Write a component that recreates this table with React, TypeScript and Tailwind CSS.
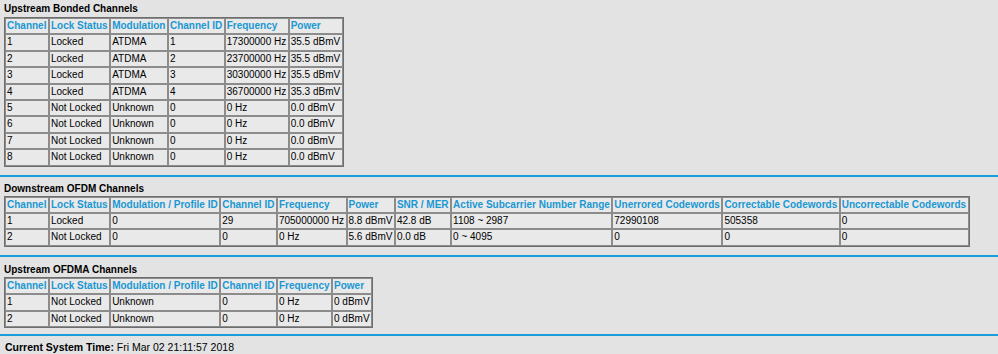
import React from "react";

type Table = { headers: string[]; rows: string[][] };

const upstreamBonded: Table = {
  headers: ["Channel", "Lock Status", "Modulation", "Channel ID", "Frequency", "Power"],
  rows: [
    ["1", "Locked", "ATDMA", "1", "17300000 Hz", "35.5 dBmV"],
    ["2", "Locked", "ATDMA", "2", "23700000 Hz", "35.5 dBmV"],
    ["3", "Locked", "ATDMA", "3", "30300000 Hz", "35.5 dBmV"],
    ["4", "Locked", "ATDMA", "4", "36700000 Hz", "35.3 dBmV"],
    ["5", "Not Locked", "Unknown", "0", "0 Hz", "0.0 dBmV"],
    ["6", "Not Locked", "Unknown", "0", "0 Hz", "0.0 dBmV"],
    ["7", "Not Locked", "Unknown", "0", "0 Hz", "0.0 dBmV"],
    ["8", "Not Locked", "Unknown", "0", "0 Hz", "0.0 dBmV"],
  ],
};

const downstreamOfdm: Table = {
  headers: [
    "Channel",
    "Lock Status",
    "Modulation / Profile ID",
    "Channel ID",
    "Frequency",
    "Power",
    "SNR / MER",
    "Active Subcarrier Number Range",
    "Unerrored Codewords",
    "Correctable Codewords",
    "Uncorrectable Codewords",
  ],
  rows: [
    ["1", "Locked", "0", "29", "705000000 Hz", "8.8 dBmV", "42.8 dB", "1108 ~ 2987", "72990108", "505358", "0"],
    ["2", "Not Locked", "0", "0", "0 Hz", "5.6 dBmV", "0.0 dB", "0 ~ 4095", "0", "0", "0"],
  ],
};

const upstreamOfdma: Table = {
  headers: ["Channel", "Lock Status", "Modulation / Profile ID", "Channel ID", "Frequency", "Power"],
  rows: [
    ["1", "Not Locked", "Unknown", "0", "0 Hz", "0 dBmV"],
    ["2", "Not Locked", "Unknown", "0", "0 Hz", "0 dBmV"],
  ],
};

function StatusTable({ data }: { data: Table }) {
  return (
    <table className="border-separate border-spacing-0 border border-[#6e6e6e] bg-[#e9e9e9]">
      <thead>
        <tr>
          {data.headers.map((h) => (
            <th
              key={h}
              className="whitespace-nowrap border border-[#8c8c8c] py-[1px] pl-[1px] pr-[1.5px] text-left font-bold leading-[12.4px] text-[#1a98d3]"
            >
              {h}
            </th>
          ))}
        </tr>
      </thead>
      <tbody>
        {data.rows.map((r, i) => (
          <tr key={i}>
            {r.map((c, j) => (
              <td
                key={j}
                className="whitespace-nowrap border border-[#8c8c8c] py-[1px] pl-[1px] pr-[1.5px] text-left leading-[12.4px] text-black"
              >
                {c}
              </td>
            ))}
          </tr>
        ))}
      </tbody>
    </table>
  );
}

function Rule() {
  return <div className="h-[2px] w-full bg-[#1c9cd8]" />;
}

export default function App() {
  return (
    <div
      className="min-h-[354px] w-[998px] bg-[#e3e3e3] text-[10px] text-black"
      style={{ fontFamily: '"Liberation Sans", Arial, Helvetica, sans-serif' }}
    >
      <div className="pl-[4px] pt-[3px]">
        <h2 className="text-[10px] font-bold leading-[12px]">Upstream Bonded Channels</h2>
        <div className="mt-[2px]">
          <StatusTable data={upstreamBonded} />
        </div>
      </div>
      <div className="mt-[8px]">
        <Rule />
      </div>
      <div className="pl-[4px] pt-[6px]">
        <h2 className="text-[10px] font-bold leading-[12px]">Downstream OFDM Channels</h2>
        <div className="mt-[1px]">
          <StatusTable data={downstreamOfdm} />
        </div>
      </div>
      <div className="mt-[8px]">
        <Rule />
      </div>
      <div className="pl-[4px] pt-[7px]">
        <h2 className="text-[10px] font-bold leading-[12px]">Upstream OFDMA Channels</h2>
        <div className="mt-[1px]">
          <StatusTable data={upstreamOfdma} />
        </div>
      </div>
      <div className="mt-[6px]">
        <Rule />
      </div>
      <div className="pl-[5px] pt-[5px] text-[10.5px] leading-[12px]">
        <span className="font-bold">Current System Time: </span>
        <span>Fri Mar 02 21:11:57 2018</span>
      </div>
    </div>
  );
}
